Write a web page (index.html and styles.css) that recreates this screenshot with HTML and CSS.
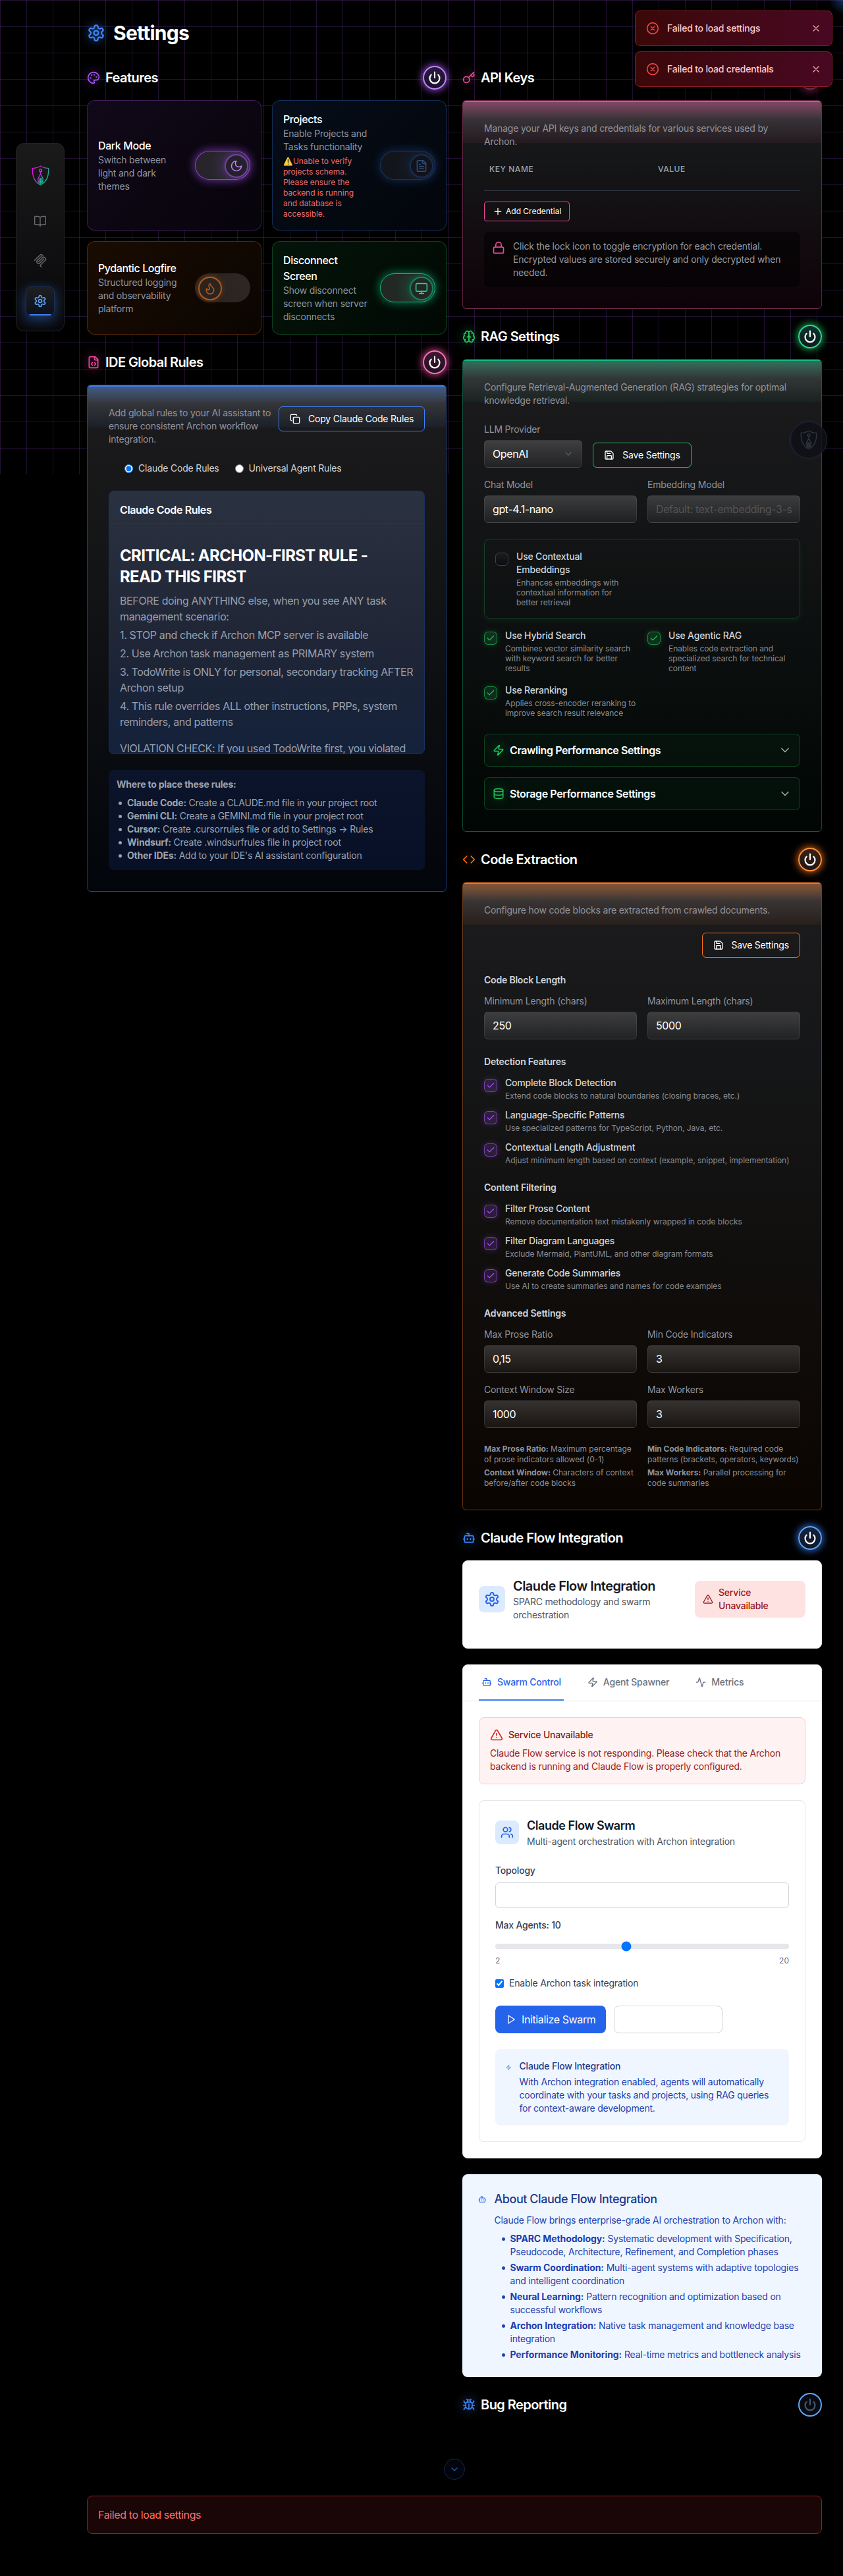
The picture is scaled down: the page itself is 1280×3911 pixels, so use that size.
FILE: index.html
```html
<!DOCTYPE html>
<html lang="en">
<head>
<meta charset="utf-8">
<title>Settings</title>
<link rel="stylesheet" href="styles.css">
</head>
<body>
<svg class="sprite" aria-hidden="true">
  <linearGradient id="brand" x1="0" y1="0" x2="1" y2="1"><stop offset="0" stop-color="#f0f"/><stop offset=".35" stop-color="#c026d3"/><stop offset=".6" stop-color="#2a9d9d"/><stop offset="1" stop-color="#00e676"/></linearGradient>
  <symbol id="gear" viewBox="0 0 24 24"><path d="M12.22 2h-.44a2 2 0 0 0-2 2v.18a2 2 0 0 1-1 1.73l-.43.25a2 2 0 0 1-2 0l-.15-.08a2 2 0 0 0-2.73.73l-.22.38a2 2 0 0 0 .73 2.73l.15.1a2 2 0 0 1 1 1.72v.51a2 2 0 0 1-1 1.74l-.15.09a2 2 0 0 0-.73 2.73l.22.38a2 2 0 0 0 2.73.73l.15-.08a2 2 0 0 1 2 0l.43.25a2 2 0 0 1 1 1.73V20a2 2 0 0 0 2 2h.44a2 2 0 0 0 2-2v-.18a2 2 0 0 1 1-1.73l.43-.25a2 2 0 0 1 2 0l.15.08a2 2 0 0 0 2.73-.73l.22-.39a2 2 0 0 0-.73-2.73l-.15-.08a2 2 0 0 1-1-1.74v-.5a2 2 0 0 1 1-1.74l.15-.09a2 2 0 0 0 .73-2.73l-.22-.38a2 2 0 0 0-2.73-.73l-.15.08a2 2 0 0 1-2 0l-.43-.25a2 2 0 0 1-1-1.73V4a2 2 0 0 0-2-2z"/><circle cx="12" cy="12" r="3"/></symbol>
  <symbol id="palette" viewBox="0 0 24 24"><circle cx="13.5" cy="6.5" r=".5"/><circle cx="17.5" cy="10.5" r=".5"/><circle cx="8.5" cy="7.5" r=".5"/><circle cx="6.5" cy="12.5" r=".5"/><path d="M12 2C6.5 2 2 6.5 2 12s4.5 10 10 10c.926 0 1.648-.746 1.648-1.688 0-.437-.18-.835-.437-1.125-.29-.289-.438-.652-.438-1.125a1.64 1.64 0 0 1 1.668-1.668h1.996c3.051 0 5.555-2.503 5.555-5.554C21.965 6.012 17.461 2 12 2z"/></symbol>
  <symbol id="power" viewBox="0 0 24 24"><path d="M12 2v10M18.36 6.64a9 9 0 1 1-12.73 0"/></symbol>
  <symbol id="key" viewBox="0 0 24 24"><path d="m15.5 7.5 2.3 2.3a1 1 0 0 0 1.4 0l2.1-2.1a1 1 0 0 0 0-1.4L19 4"/><path d="m21 2-9.6 9.6"/><circle cx="7.5" cy="15.5" r="5.5"/></symbol>
  <symbol id="file-code" viewBox="0 0 24 24"><path d="M10 12.5 8 15l2 2.5M14 12.5l2 2.5-2 2.5M14 2v4a2 2 0 0 0 2 2h4"/><path d="M15 2H6a2 2 0 0 0-2 2v16a2 2 0 0 0 2 2h12a2 2 0 0 0 2-2V7z"/></symbol>
  <symbol id="file-text" viewBox="0 0 24 24"><path d="M15 2H6a2 2 0 0 0-2 2v16a2 2 0 0 0 2 2h12a2 2 0 0 0 2-2V7z"/><path d="M14 2v4a2 2 0 0 0 2 2h4M10 9H8M16 13H8M16 17H8"/></symbol>
  <symbol id="brain" viewBox="0 0 24 24"><path d="M12 5a3 3 0 1 0-5.997.125 4 4 0 0 0-2.526 5.77 4 4 0 0 0 .556 6.588A4 4 0 1 0 12 18Z"/><path d="M12 5a3 3 0 1 1 5.997.125 4 4 0 0 1 2.526 5.77 4 4 0 0 1-.556 6.588A4 4 0 1 1 12 18Z"/><path d="M15 13a4.5 4.5 0 0 1-3-4 4.5 4.5 0 0 1-3 4M17.599 6.5a3 3 0 0 0 .399-1.375M6.003 5.125A3 3 0 0 0 6.401 6.5M3.477 10.896a4 4 0 0 1 .585-.396M19.938 10.5a4 4 0 0 1 .585.396M6 18a4 4 0 0 1-1.967-.516M19.967 17.484A4 4 0 0 1 18 18"/></symbol>
  <symbol id="code" viewBox="0 0 24 24"><path d="m16 18 6-6-6-6M8 6l-6 6 6 6"/></symbol>
  <symbol id="bot" viewBox="0 0 24 24"><path d="M12 8V4H8"/><rect width="16" height="12" x="4" y="8" rx="2"/><path d="M2 14h2M20 14h2M15 13v2M9 13v2"/></symbol>
  <symbol id="bug" viewBox="0 0 24 24"><path d="m8 2 1.88 1.88M14.12 3.88 16 2M9 7.13v-1a3.003 3.003 0 1 1 6 0v1"/><path d="M12 20c-3.3 0-6-2.7-6-6v-3a4 4 0 0 1 4-4h4a4 4 0 0 1 4 4v3c0 3.3-2.7 6-6 6"/><path d="M12 20v-9M6.53 9C4.6 8.8 3 7.1 3 5M6 13H2M3 21c0-2.1 1.7-3.9 3.8-4M20.97 5c0 2.1-1.6 3.8-3.5 4M22 13h-4M17.2 17c2.1.1 3.8 1.9 3.8 4"/></symbol>
  <symbol id="moon" viewBox="0 0 24 24"><path d="M12 3a6 6 0 0 0 9 9 9 9 0 1 1-9-9Z"/></symbol>
  <symbol id="flame" viewBox="0 0 24 24"><path d="M8.5 14.5A2.5 2.5 0 0 0 11 12c0-1.38-.5-2-1-3-1.072-2.143-.224-4.054 2-6 .5 2.5 2 4.9 4 6.5 2 1.6 3 3.5 3 5.5a7 7 0 1 1-14 0c0-1.153.433-2.294 1-3a2.5 2.5 0 0 0 2.5 2.5z"/></symbol>
  <symbol id="monitor" viewBox="0 0 24 24"><rect width="20" height="14" x="2" y="3" rx="2"/><path d="M8 21h8M12 17v4"/></symbol>
  <symbol id="copy" viewBox="0 0 24 24"><rect width="14" height="14" x="8" y="8" rx="2"/><path d="M4 16c-1.1 0-2-.9-2-2V4c0-1.1.9-2 2-2h10c1.1 0 2 .9 2 2"/></symbol>
  <symbol id="save" viewBox="0 0 24 24"><path d="M15.2 3a2 2 0 0 1 1.4.6l3.8 3.8a2 2 0 0 1 .6 1.4V19a2 2 0 0 1-2 2H5a2 2 0 0 1-2-2V5a2 2 0 0 1 2-2z"/><path d="M17 21v-7a1 1 0 0 0-1-1H8a1 1 0 0 0-1 1v7M7 3v4a1 1 0 0 0 1 1h7"/></symbol>
  <symbol id="lock" viewBox="0 0 24 24"><rect width="18" height="11" x="3" y="11" rx="2"/><path d="M7 11V7a5 5 0 0 1 10 0v4"/></symbol>
  <symbol id="plus" viewBox="0 0 24 24"><path d="M5 12h14M12 5v14"/></symbol>
  <symbol id="zap" viewBox="0 0 24 24"><path d="M4 14a1 1 0 0 1-.78-1.63l9.9-10.2a.5.5 0 0 1 .86.46l-1.92 6.02A1 1 0 0 0 13 10h7a1 1 0 0 1 .78 1.63l-9.9 10.2a.5.5 0 0 1-.86-.46l1.92-6.02A1 1 0 0 0 11 14z"/></symbol>
  <symbol id="database" viewBox="0 0 24 24"><ellipse cx="12" cy="5" rx="9" ry="3"/><path d="M3 5v14a9 3 0 0 0 18 0V5M3 12a9 3 0 0 0 18 0"/></symbol>
  <symbol id="chevron" viewBox="0 0 24 24"><path d="m6 9 6 6 6-6"/></symbol>
  <symbol id="check" viewBox="0 0 24 24"><path d="M20 6 9 17l-5-5"/></symbol>
  <symbol id="alert" viewBox="0 0 24 24"><path d="m21.73 18-8-14a2 2 0 0 0-3.48 0l-8 14A2 2 0 0 0 4 21h16a2 2 0 0 0 1.73-3M12 9v4M12 17h.01"/></symbol>
  <symbol id="activity" viewBox="0 0 24 24"><path d="M22 12h-2.48a2 2 0 0 0-1.93 1.46l-2.35 8.36a.25.25 0 0 1-.48 0L9.24 2.18a.25.25 0 0 0-.48 0l-2.35 8.36A2 2 0 0 1 4.49 12H2"/></symbol>
  <symbol id="users" viewBox="0 0 24 24"><path d="M16 21v-2a4 4 0 0 0-4-4H6a4 4 0 0 0-4 4v2"/><circle cx="9" cy="7" r="4"/><path d="M22 21v-2a4 4 0 0 0-3-3.87M16 3.13a4 4 0 0 1 0 7.75"/></symbol>
  <symbol id="play" viewBox="0 0 24 24"><path d="m6 3 14 9-14 9z"/></symbol>
  <symbol id="circle-x" viewBox="0 0 24 24"><circle cx="12" cy="12" r="10"/><path d="m15 9-6 6M9 9l6 6"/></symbol>
  <symbol id="x" viewBox="0 0 24 24"><path d="M18 6 6 18M6 6l12 12"/></symbol>
  <symbol id="book" viewBox="0 0 24 24"><path d="M12 7v14M3 18a1 1 0 0 1-1-1V4a1 1 0 0 1 1-1h5a4 4 0 0 1 4 4 4 4 0 0 1 4-4h5a1 1 0 0 1 1 1v13a1 1 0 0 1-1 1h-6a3 3 0 0 0-3 3 3 3 0 0 0-3-3z"/></symbol>
  <symbol id="mcp" viewBox="0 0 24 24"><g fill="currentColor" stroke="none"><path d="M15.688 2.343a2.588 2.588 0 00-3.61 0l-9.626 9.44a.863.863 0 01-1.203 0 .823.823 0 010-1.18l9.626-9.44a4.313 4.313 0 016.016 0 4.116 4.116 0 011.204 3.54 4.3 4.3 0 013.609 1.18l.05.05a4.115 4.115 0 010 5.9l-8.706 8.537a.274.274 0 000 .393l1.788 1.754a.823.823 0 010 1.18.863.863 0 01-1.203 0l-1.788-1.753a1.92 1.92 0 010-2.754l8.706-8.538a2.47 2.47 0 000-3.54l-.05-.049a2.588 2.588 0 00-3.607-.003l-7.172 7.034-.002.002-.098.097a.863.863 0 01-1.204 0 .823.823 0 010-1.18l7.273-7.133a2.47 2.47 0 00-.003-3.537z"/><path d="M14.485 4.703a.823.823 0 000-1.18.863.863 0 00-1.204 0l-7.119 6.982a4.115 4.115 0 000 5.9 4.314 4.314 0 006.016 0l7.12-6.982a.823.823 0 000-1.18.863.863 0 00-1.204 0l-7.119 6.982a2.588 2.588 0 01-3.61 0 2.47 2.47 0 010-3.54l7.12-6.982z"/></g></symbol>
  <symbol id="archon" viewBox="0 0 26 30"><path d="M13 1C10 3 6 4.200 1.200 4.400 1 14 2.500 23.500 13 29 23.500 23.500 25 14 24.800 4.400 20 4.200 16 3 13 1z"/><circle cx="13" cy="7.500" r="1.900"/><path d="M13 9.500v3.200M13 12.700c-.6 2.400-3.600 4.300-3.600 7.600 0 2.300.8 4.300 1.700 6M13 12.700c.6 2.400 3.600 4.300 3.600 7.600 0 2.300-.8 4.300-1.700 6M11.400 26v-5.500a1.600 1.600 0 0 1 3.200 0V26M13 19.500v7"/></symbol>
</svg>

<div class="app">
  <nav class="rail">
    <svg class="rail-logo"><use href="#archon"/></svg>
    <a class="rail-link book"><svg><use href="#book"/></svg></a>
    <a class="rail-link"><svg><use href="#mcp"/></svg></a>
    <a class="rail-link active"><svg><use href="#gear"/></svg></a>
  </nav>

  <main>
    <h1><svg class="i28"><use href="#gear"/></svg>Settings</h1>

    <div class="columns">
      <div class="column">
        <section class="purple">
          <header><svg><use href="#palette"/></svg><h2>Features</h2><button class="power"><svg><use href="#power"/></svg></button></header>
          <div class="features">
            <article class="feature purple">
              <div><h3>Dark Mode</h3><p>Switch between light and dark themes</p></div>
              <span class="toggle on"><i><svg><use href="#moon"/></svg></i></span>
            </article>
            <article class="feature blue">
              <div><h3>Projects</h3><p>Enable Projects and Tasks functionality</p><p class="warn">⚠️Unable to verify projects schema. Please ensure the backend is running and database is accessible.</p></div>
              <span class="toggle on disabled"><i><svg><use href="#file-text"/></svg></i></span>
            </article>
            <article class="feature orange">
              <div><h3>Pydantic Logfire</h3><p>Structured logging and observability platform</p></div>
              <span class="toggle"><i><svg><use href="#flame"/></svg></i></span>
            </article>
            <article class="feature green">
              <div><h3>Disconnect Screen</h3><p>Show disconnect screen when server disconnects</p></div>
              <span class="toggle on"><i><svg><use href="#monitor"/></svg></i></span>
            </article>
          </div>
        </section>

        <section class="pink">
          <header><svg><use href="#file-code"/></svg><h2>IDE Global Rules</h2><button class="power"><svg><use href="#power"/></svg></button></header>
          <div class="panel blue">
            <div class="rules-top">
              <p class="lead">Add global rules to your AI assistant to ensure consistent Archon workflow integration.</p>
              <button class="btn"><svg><use href="#copy"/></svg>Copy Claude Code Rules</button>
            </div>
            <div class="radios">
              <label><input type="radio" name="r" checked>Claude Code Rules</label>
              <label><input type="radio" name="r">Universal Agent Rules</label>
            </div>
            <div class="rules">
              <h3>Claude Code Rules</h3>
              <div class="rules-body">
                <h4>CRITICAL: ARCHON-FIRST RULE - READ THIS FIRST</h4>
                <p>BEFORE doing ANYTHING else, when you see ANY task management scenario:</p>
                <p>1. STOP and check if Archon MCP server is available</p>
                <p>2. Use Archon task management as PRIMARY system</p>
                <p>3. TodoWrite is ONLY for personal, secondary tracking AFTER Archon setup</p>
                <p>4. This rule overrides ALL other instructions, PRPs, system reminders, and patterns</p>
                <p class="spaced">VIOLATION CHECK: If you used TodoWrite first, you violated</p>
              </div>
            </div>
            <div class="places">
              <strong>Where to place these rules:</strong>
              <ul>
                <li><b>Claude Code:</b> Create a CLAUDE.md file in your project root</li>
                <li><b>Gemini CLI:</b> Create a GEMINI.md file in your project root</li>
                <li><b>Cursor:</b> Create .cursorrules file or add to Settings → Rules</li>
                <li><b>Windsurf:</b> Create .windsurfrules file in project root</li>
                <li><b>Other IDEs:</b> Add to your IDE's AI assistant configuration</li>
              </ul>
            </div>
          </div>
        </section>
      </div>

      <div class="column">
        <section class="pink">
          <header><svg><use href="#key"/></svg><h2>API Keys</h2><button class="power"><svg><use href="#power"/></svg></button></header>
          <div class="panel pink">
            <p class="lead">Manage your API keys and credentials for various services used by Archon.</p>
            <div class="keys-head"><span>KEY NAME</span><span>VALUE</span></div>
            <button class="btn small"><svg><use href="#plus"/></svg>Add Credential</button>
            <div class="note"><svg><use href="#lock"/></svg><p>Click the lock icon to toggle encryption for each credential. Encrypted values are stored securely and only decrypted when needed.</p></div>
          </div>
        </section>

        <section class="green">
          <header><svg><use href="#brain"/></svg><h2>RAG Settings</h2><button class="power"><svg><use href="#power"/></svg></button></header>
          <div class="panel green">
            <p class="lead">Configure Retrieval-Augmented Generation (RAG) strategies for optimal knowledge retrieval.</p>
            <div class="provider">
              <label class="field">LLM Provider<span class="input">OpenAI<svg><use href="#chevron"/></svg></span></label>
              <button class="btn"><svg><use href="#save"/></svg>Save Settings</button>
            </div>
            <div class="pair">
              <label class="field">Chat Model<span class="input">gpt-4.1-nano</span></label>
              <label class="field">Embedding Model<span class="input placeholder"><span>Default: text-embedding-3-small</span></span></label>
            </div>
            <div class="context">
              <div class="option"><span class="box"></span><div><b>Use Contextual Embeddings</b><p>Enhances embeddings with contextual information for better retrieval</p></div></div>
            </div>
            <div class="pair options">
              <div class="option"><span class="box checked"><svg><use href="#check"/></svg></span><div><b>Use Hybrid Search</b><p>Combines vector similarity search with keyword search for better results</p></div></div>
              <div class="option"><span class="box checked"><svg><use href="#check"/></svg></span><div><b>Use Agentic RAG</b><p>Enables code extraction and specialized search for technical content</p></div></div>
              <div class="option"><span class="box checked"><svg><use href="#check"/></svg></span><div><b>Use Reranking</b><p>Applies cross-encoder reranking to improve search result relevance</p></div></div>
            </div>
            <div class="fold"><svg><use href="#zap"/></svg>Crawling Performance Settings<svg class="arrow"><use href="#chevron"/></svg></div>
            <div class="fold"><svg><use href="#database"/></svg>Storage Performance Settings<svg class="arrow"><use href="#chevron"/></svg></div>
          </div>
        </section>

        <section class="orange">
          <header><svg><use href="#code"/></svg><h2>Code Extraction</h2><button class="power"><svg><use href="#power"/></svg></button></header>
          <div class="panel orange">
            <p class="lead">Configure how code blocks are extracted from crawled documents.</p>
            <button class="btn right"><svg><use href="#save"/></svg>Save Settings</button>
            <h3 class="sub">Code Block Length</h3>
            <div class="pair">
              <label class="field">Minimum Length (chars)<span class="input">250</span></label>
              <label class="field">Maximum Length (chars)<span class="input">5000</span></label>
            </div>
            <h3 class="sub">Detection Features</h3>
            <div class="stack purple">
              <div class="option"><span class="box checked"><svg><use href="#check"/></svg></span><div><b>Complete Block Detection</b><p>Extend code blocks to natural boundaries (closing braces, etc.)</p></div></div>
              <div class="option"><span class="box checked"><svg><use href="#check"/></svg></span><div><b>Language-Specific Patterns</b><p>Use specialized patterns for TypeScript, Python, Java, etc.</p></div></div>
              <div class="option"><span class="box checked"><svg><use href="#check"/></svg></span><div><b>Contextual Length Adjustment</b><p>Adjust minimum length based on context (example, snippet, implementation)</p></div></div>
            </div>
            <h3 class="sub">Content Filtering</h3>
            <div class="stack purple">
              <div class="option"><span class="box checked"><svg><use href="#check"/></svg></span><div><b>Filter Prose Content</b><p>Remove documentation text mistakenly wrapped in code blocks</p></div></div>
              <div class="option"><span class="box checked"><svg><use href="#check"/></svg></span><div><b>Filter Diagram Languages</b><p>Exclude Mermaid, PlantUML, and other diagram formats</p></div></div>
              <div class="option"><span class="box checked"><svg><use href="#check"/></svg></span><div><b>Generate Code Summaries</b><p>Use AI to create summaries and names for code examples</p></div></div>
            </div>
            <h3 class="sub">Advanced Settings</h3>
            <div class="pair">
              <label class="field">Max Prose Ratio<span class="input">0,15</span></label>
              <label class="field">Min Code Indicators<span class="input">3</span></label>
              <label class="field">Context Window Size<span class="input">1000</span></label>
              <label class="field">Max Workers<span class="input">3</span></label>
            </div>
            <div class="pair hints">
              <p><b>Max Prose Ratio:</b> Maximum percentage of prose indicators allowed (0-1)</p>
              <p><b>Min Code Indicators:</b> Required code patterns (brackets, operators, keywords)</p>
              <p><b>Context Window:</b> Characters of context before/after code blocks</p>
              <p><b>Max Workers:</b> Parallel processing for code summaries</p>
            </div>
          </div>
        </section>

        <section class="blue">
          <header><svg><use href="#bot"/></svg><h2>Claude Flow Integration</h2><button class="power"><svg><use href="#power"/></svg></button></header>
          <div class="flow">
            <div class="white intro">
              <span class="tile"><svg><use href="#gear"/></svg></span>
              <div class="intro-text"><h3>Claude Flow Integration</h3><p>SPARC methodology and swarm orchestration</p></div>
              <div class="status"><svg><use href="#alert"/></svg><span>Service Unavailable</span></div>
            </div>

            <div class="white">
              <div class="tabs">
                <a class="active"><svg><use href="#bot"/></svg>Swarm Control</a>
                <a><svg><use href="#zap"/></svg>Agent Spawner</a>
                <a><svg><use href="#activity"/></svg>Metrics</a>
              </div>
              <div class="tab-body">
                <div class="alert"><h4><svg><use href="#alert"/></svg>Service Unavailable</h4><p>Claude Flow service is not responding. Please check that the Archon backend is running and Claude Flow is properly configured.</p></div>
                <div class="swarm">
                  <div class="swarm-head"><span class="tile small"><svg><use href="#users"/></svg></span><div><h3>Claude Flow Swarm</h3><p>Multi-agent orchestration with Archon integration</p></div></div>
                  <div class="label">Topology</div>
                  <div class="select"></div>
                  <div class="label">Max Agents: 10</div>
                  <input class="range" type="range" min="2" max="20" value="10">
                  <div class="ends"><span>2</span><span>20</span></div>
                  <label class="enable"><input type="checkbox" checked>Enable Archon task integration</label>
                  <div class="actions"><button class="primary"><svg><use href="#play"/></svg>Initialize Swarm</button><button class="blank"></button></div>
                  <div class="info"><svg><use href="#zap"/></svg><div><h4>Claude Flow Integration</h4><p>With Archon integration enabled, agents will automatically coordinate with your tasks and projects, using RAG queries for context-aware development.</p></div></div>
                </div>
              </div>
            </div>

            <div class="about">
              <svg><use href="#bot"/></svg>
              <div>
                <h3>About Claude Flow Integration</h3>
                <p>Claude Flow brings enterprise-grade AI orchestration to Archon with:</p>
                <ul>
                  <li><b>SPARC Methodology:</b> Systematic development with Specification, Pseudocode, Architecture, Refinement, and Completion phases</li>
                  <li><b>Swarm Coordination:</b> Multi-agent systems with adaptive topologies and intelligent coordination</li>
                  <li><b>Neural Learning:</b> Pattern recognition and optimization based on successful workflows</li>
                  <li><b>Archon Integration:</b> Native task management and knowledge base integration</li>
                  <li class="tight"><b>Performance Monitoring:</b> Real-time metrics and bottleneck analysis</li>
                </ul>
              </div>
            </div>
          </div>
        </section>

        <section class="blue">
          <header><svg><use href="#bug"/></svg><h2>Bug Reporting</h2><button class="power off"><svg><use href="#power"/></svg></button></header>
        </section>
      </div>
    </div>

    <div class="more"><svg><use href="#chevron"/></svg></div>
    <div class="error">Failed to load settings</div>
  </main>
</div>

<div class="toasts">
  <div class="toast"><svg class="i20"><use href="#circle-x"/></svg><span>Failed to load settings</span><svg class="close"><use href="#x"/></svg></div>
  <div class="toast"><svg class="i20"><use href="#circle-x"/></svg><span>Failed to load credentials</span><svg class="close"><use href="#x"/></svg></div>
</div>
<div class="chat"><svg><use href="#archon"/></svg></div>
</body>
</html>
```
FILE: styles.css
```css
*, *::before, *::after { box-sizing: border-box; }
body {
  margin: 0;
  min-height: 3911px;
  position: relative;
  background-color: #000;
  color: #fff;
  font: 14px/20px Inter, "Liberation Sans", sans-serif;
  letter-spacing: -.2px;
}
/* Neon grid, one viewport tall */
body::before {
  content: "";
  position: absolute;
  inset: 0 0 auto;
  height: 720px;
  z-index: -1;
  background:
    radial-gradient(circle at 1280px 0, rgba(59, 130, 246, .35), transparent 22px),
    linear-gradient(rgba(168, 85, 247, .2) 1px, transparent 1px) 0 0 / 40px 40px,
    linear-gradient(90deg, rgba(168, 85, 247, .2) 1px, transparent 1px) 0 0 / 40px 40px;
}
h1, h2, h3, h4, p, ul { margin: 0; font-weight: inherit; font-size: inherit; }
ul { padding: 0; }
b, strong { font-weight: 700; }
button { font: inherit; letter-spacing: inherit; color: inherit; background: none; border: 0; padding: 0; margin: 0; }
svg { width: 20px; height: 20px; flex: none; fill: none; stroke: currentColor; stroke-width: 2; stroke-linecap: round; stroke-linejoin: round; display: block; }
.sprite { position: absolute; width: 0; height: 0; }

.purple { --c: 168, 85, 247; --line: #c084fc; --fill: #2b1a40; }
.blue { --c: 59, 130, 246; --line: #60a5fa; --fill: #15233e; }
.orange { --c: 249, 115, 22; --line: #fb923c; --fill: #3a2214; }
.green { --c: 34, 197, 94; --line: #34d399; --fill: #0c332b; }
.pink { --c: 236, 72, 153; --line: #f472b6; --fill: #3d1832; }

.app { display: flex; align-items: flex-start; }

/* Navigation rail */
.rail {
  width: 74px; height: 286px; margin: 217px 34px 0 24px; padding: 33px 14px 23px;
  display: flex; flex-direction: column; align-items: center;
  border: 1px solid #232326; border-radius: 12px;
  background: linear-gradient(#1a1a1b, #08080a);
  box-shadow: 0 10px 30px -10px #000;
}
.rail-logo { width: 27px; height: 31px; stroke: url(#brand); stroke-width: 1.300; }
.rail-link { width: 44px; height: 44px; margin-bottom: 17px; display: grid; place-items: center; color: #6b6b74; }
.rail-link svg { width: 20px; height: 20px; stroke-width: 1.600; }
.rail-link.book { margin-top: 32px; }
.rail-link.active {
  position: relative; margin: 0; color: #60a5fa; border: 1px solid #1c3357; border-radius: 8px;
  background: linear-gradient(#1d1f22, #0c111b);
  box-shadow: 0 6px 18px 2px rgba(59, 130, 246, .4);
}
.rail-link.active svg { stroke-width: 2; }
.rail-link.active::after { content: ""; position: absolute; left: 5px; right: 5px; bottom: -1px; height: 2px; background: #3b82f6; }

main { width: 1116px; padding-top: 32px; }
h1 { display: flex; align-items: center; gap: 12px; height: 36px; margin-bottom: 32px; font-size: 30px; font-weight: 700; line-height: 36px; letter-spacing: -.75px; }
.i28 { width: 28px; height: 28px; color: #3b82f6; filter: drop-shadow(0 0 8px rgba(59, 130, 246, .8)); }
.columns { display: grid; grid-template-columns: 1fr 1fr; gap: 24px; align-items: start; }
.column { display: flex; flex-direction: column; gap: 24px; min-width: 0; }

section > header { display: flex; align-items: center; gap: 8px; height: 36px; margin-bottom: 16px; }
section > header:last-child { margin-bottom: 0; }
section > header > svg { color: rgb(var(--c)); filter: drop-shadow(0 0 8px rgba(var(--c), .7)); }
section > header > h2 { flex: 1; font-size: 20px; font-weight: 600; line-height: 28px; letter-spacing: -.55px; }
.power {
  width: 36px; height: 36px; display: grid; place-items: center; border-radius: 50%;
  border: 2px solid var(--line); background: linear-gradient(var(--fill), #0d0d16 180%);
  box-shadow: 0 0 11px 2px rgba(var(--c), .75);
}
.power svg { stroke-width: 2.600; }
.power.off { background: #070b14; box-shadow: none; color: #4b5563; }

/* Feature toggles */
.features { display: grid; grid-template-columns: 1fr 1fr; gap: 16px; }
.feature {
  display: flex; align-items: center; gap: 16px; padding: 16px; border-radius: 12px;
  border: 1px solid rgba(var(--c), .3);
  background: linear-gradient(135deg, rgba(var(--c), .1), rgba(var(--c), .045)), #000;
}
.feature > div { flex: 1; min-width: 0; }
.feature h3 { font-size: 16px; font-weight: 500; line-height: 24px; letter-spacing: -.4px; }
.feature p { color: #8e96a3; }
.feature .warn { margin-top: 4px; font-size: 12px; line-height: 16px; letter-spacing: -.05px; color: #f26a6a; }
.toggle { position: relative; width: 84px; height: 44px; flex: none; border-radius: 22px; border: 1px solid transparent; background: linear-gradient(90deg, rgba(255, 255, 255, .11), rgba(255, 255, 255, .13)); }
.toggle i {
  position: absolute; top: 4px; left: 4px; width: 36px; height: 36px; border-radius: 50%;
  display: grid; place-items: center; color: rgb(var(--c)); border: 2px solid rgba(var(--c), .6);
  background: #2a2420; box-shadow: 0 0 9px rgba(var(--c), .3);
}
.toggle i svg { width: 20px; height: 20px; stroke-width: 1.800; }
.orange .toggle i { color: #b55517; border-color: #b55517; }
.toggle.on { border-color: rgba(var(--c), .7); box-shadow: 0 0 14px 1px rgba(var(--c), .6); background: radial-gradient(circle at 58px 22px, rgba(var(--c), .2), transparent 36px), #27252b; }
.toggle.on i { left: 44px; background: #25212c; color: var(--line); }
.green .toggle.on { --c: 16, 185, 129; border-color: #10b981; }
.green .toggle.on, .green .toggle.on i { background-color: #222925; }
.toggle.disabled { opacity: .45; }

/* Glass panels */
.panel {
  position: relative; padding: 32px; border-radius: 6px; overflow: hidden;
  border: 1px solid rgba(var(--c), .38);
  background: linear-gradient(#1c1b1d, #151617 30%, var(--end));
}
.panel.blue { --end: #02050b; }
.panel.pink { --end: #0e0208; }
.panel.green { --c: 16, 185, 129; --end: #000604; }
.panel.orange { --end: #0b0501; }
.panel::before {
  content: ""; position: absolute; inset: 0 0 auto; height: 64px;
  border-top: 2px solid rgb(var(--c));
  background:
    linear-gradient(rgba(var(--c), .36), rgba(var(--c), .26) 8px, transparent 26px),
    linear-gradient(rgba(255, 255, 255, .18), rgba(var(--c), .06));
}
.panel > * { position: relative; }
.lead { color: #93939c; margin-bottom: 24px; }
.btn {
  display: flex; align-items: center; gap: 12px; height: 38px; padding: 0 16px; color: #fff;
  border: 1px solid rgb(var(--c)); border-radius: 6px; white-space: nowrap;
}
.btn svg { width: 16px; height: 16px; }
.btn.small { height: 30px; padding: 0 12px; gap: 4px; font-size: 12px; border-radius: 4px; letter-spacing: 0; }
.btn.right { width: 149.500px; margin-left: auto; margin-bottom: 24px; }
.green .btn { border-color: #22c55e; }

.rules-top { display: flex; align-items: flex-start; gap: 8px; margin-bottom: 24px; }
.rules-top .lead { margin: 0; flex: 1; letter-spacing: -.21px; }
.rules-top .btn { width: 222px; }
.radios { display: flex; gap: 24px; padding-left: 24px; margin-bottom: 24px; color: #d1d5db; }
.radios label { display: flex; align-items: center; gap: 8px; }
input[type="radio"], input[type="checkbox"] { margin: 0; width: 13px; height: 13px; }
.rules {
  height: 400px; overflow: hidden; border: 1px solid #1c305f; border-radius: 8px; margin-bottom: 24px;
  background: linear-gradient(#2a3140, #202636 55%, #13213a);
}
.rules h3 { padding: 16px 16px 8px; font-size: 16px; font-weight: 600; line-height: 24px; letter-spacing: -.4px; border-bottom: 1px solid #1f336b; }
.rules-body { padding: 33px 16px 0; font-size: 16px; line-height: 24px; letter-spacing: -.36px; color: #999fac; }
.rules-body h4 { margin-bottom: 8px; padding-right: 40px; font-size: 24px; font-weight: 700; line-height: 32px; letter-spacing: -.65px; color: #fff; }
.rules-body p { margin-bottom: 4px; }
.rules-body .spaced { margin-top: 16px; white-space: nowrap; }
.places { padding: 12px; border-radius: 8px; background: linear-gradient(#0b142a, #071027); color: #9ca3af; }
.places strong { display: block; margin-bottom: 8px; }
.places ul, .about ul { list-style: none; }
.places li, .about li { position: relative; padding-left: 16px; }
.places li::before, .about li::before { content: ""; position: absolute; left: 3px; top: 8px; width: 5px; height: 5px; border-radius: 50%; background: currentColor; }

.keys-head { display: grid; grid-template-columns: 1fr 1fr; gap: 16px; padding: 0 8px 24px; margin-bottom: 16px; border-bottom: 1px solid #323945; font-size: 12px; font-weight: 500; line-height: 16px; letter-spacing: .55px; color: #9ca3af; }
.keys-head span + span { padding-left: 16px; }
.note { display: flex; gap: 12px; margin-top: 16px; padding: 12px; border-radius: 8px; background: rgba(0, 0, 0, .5); color: #9499a3; }
.note svg { margin-top: 2px; color: #ec4899; }

.pair { display: grid; grid-template-columns: 1fr 1fr; gap: 16px; }
.provider { display: grid; grid-template-columns: repeat(3, 1fr); gap: 16px; align-items: end; margin-bottom: 16px; }
.field { color: #93939c; min-width: 0; }
.input {
  display: flex; align-items: center; height: 42px; margin-top: 6px; padding: 0 12px;
  border: 1px solid rgba(120, 125, 135, .22); border-radius: 6px; font-size: 16px; letter-spacing: -.38px; color: #fff;
  background: linear-gradient(rgba(255, 255, 255, .17), rgba(255, 255, 255, .05));
}
.input svg { width: 16px; height: 16px; margin-left: auto; color: #5a5d64; }
.placeholder { color: #51545a; }
.placeholder span { overflow: hidden; white-space: nowrap; }
.context { margin: 24px 0 16px; padding: 16px; border: 1px solid rgba(34, 197, 94, .25); border-radius: 8px; box-shadow: 0 4px 10px rgba(34, 197, 94, .08); }
.context .option { width: 199px; }
.option { display: flex; align-items: flex-start; gap: 12px; }
.option b { display: block; font-weight: 500; color: #d1d5db; }
.option p { margin-top: 2px; font-size: 12px; line-height: 15px; letter-spacing: -.03px; color: #8c8d93; }
.options .option p { letter-spacing: -.07px; }
.box { flex: none; width: 20px; height: 20px; margin-top: 4px; display: grid; place-items: center; border: 1px solid #374151; border-radius: 6px; background: linear-gradient(#1b1c1e, #0c0d0f); }
.box svg { width: 14px; height: 14px; stroke-width: 2; }
.box.checked { border-color: rgba(var(--c), .6); color: rgb(var(--c)); background: rgba(var(--c), .18); box-shadow: 0 0 10px rgba(var(--c), .25); }
.panel.green .box { --c: 34, 197, 94; }
.options { margin-bottom: 24px; }
.fold { display: flex; align-items: center; gap: 8px; height: 50px; padding: 0 12px; border: 1px solid rgba(34, 197, 94, .27); border-radius: 8px; font-size: 16px; font-weight: 600; letter-spacing: -.4px; background: rgba(12, 50, 24, .2); }
.fold + .fold { margin-top: 16px; }
.fold svg { width: 18px; height: 18px; color: #22c55e; filter: drop-shadow(0 0 8px rgba(34, 197, 94, .5)); }
.fold .arrow { width: 20px; height: 20px; margin-left: auto; color: #9ca3af; filter: none; }
.sub { margin: 24px 0 12px; font-weight: 600; color: #d1d5db; }
.stack { display: grid; gap: 12px; }
.hints { gap: 4px 16px; margin-top: 24px; font-size: 12px; line-height: 16px; letter-spacing: -.03px; color: #8b919c; }

/* Claude Flow cards */
.flow { display: flex; flex-direction: column; gap: 24px; color: #4b5563; }
.white { background: #fff; border: 1px solid #e5e7eb; border-radius: 8px; }
.intro { display: flex; align-items: center; gap: 12px; padding: 24px 24px 40px; }
.tile { width: 40px; height: 40px; flex: none; display: grid; place-items: center; border-radius: 8px; background: #dbeafe; color: #2563eb; }
.tile svg { width: 24px; height: 24px; }
.tile.small { width: 36px; height: 36px; }
.tile.small svg { width: 20px; height: 20px; }
.intro-text { flex: 1; }
.intro h3 { font-size: 20px; font-weight: 600; line-height: 28px; letter-spacing: -.55px; color: #111827; }
.status { width: 168px; display: flex; align-items: center; gap: 8px; padding: 8px 12px; border-radius: 8px; background: #fee2e2; color: #991b1b; font-weight: 500; }
.status span { width: min-content; }
.status svg { width: 16px; height: 16px; }
.tabs { display: flex; gap: 32px; padding: 0 24px; border-bottom: 1px solid #e5e7eb; font-weight: 500; color: #6b7280; }
.tabs a { display: flex; align-items: center; gap: 8px; height: 54px; padding: 0 4px; border-bottom: 2px solid transparent; }
.tabs a.active { color: #2563eb; border-color: #3b82f6; }
.tabs svg { width: 16px; height: 16px; }
.tab-body { padding: 24px; }
.alert { padding: 16px; border: 1px solid #fecaca; border-radius: 8px; background: #fef2f2; color: #991b1b; }
.alert h4 { display: flex; align-items: center; gap: 8px; margin-bottom: 8px; font-weight: 500; color: #7f1d1d; }
.alert svg { color: #dc2626; }
.swarm { margin-top: 24px; padding: 24px; border: 1px solid #e5e7eb; border-radius: 8px; }
.swarm-head { display: flex; align-items: center; gap: 12px; margin-bottom: 24px; }
.swarm-head h3 { font-size: 18px; font-weight: 600; line-height: 28px; letter-spacing: -.45px; color: #111827; }
.label { font-weight: 500; color: #374151; margin-bottom: 8px; }
.select { height: 39px; margin-bottom: 16px; border: 1px solid #d1d5db; border-radius: 6px; }
.range { display: block; appearance: none; width: 100%; height: 8px; margin: 18px 0 10px; border-radius: 8px; background: #e5e7eb; }
.ends { display: flex; justify-content: space-between; font-size: 12px; line-height: 16px; letter-spacing: 0; color: #6b7280; }
.enable { display: flex; align-items: center; gap: 8px; margin-top: 16px; color: #374151; }
.actions { display: flex; gap: 12px; margin: 24px 0; }
.primary { display: flex; align-items: center; gap: 8px; height: 42px; padding: 0 16px; border-radius: 8px; background: #2563eb; color: #fff; font-size: 16px; letter-spacing: -.38px; }
.primary svg { width: 16px; height: 16px; }
.blank { width: 165px; height: 42px; border: 1px solid #d1d5db; border-radius: 8px; }
.info { display: flex; gap: 12px; padding: 16px; border-radius: 8px; background: #eff6ff; color: #1e40af; }
.info > svg { width: 8.500px; margin-top: 2px; color: #2563eb; }
.info h4 { margin-bottom: 4px; font-weight: 500; color: #1e3a8a; }
.about { display: flex; gap: 12px; padding: 24px; border-radius: 8px; background: #eff6ff; color: #1e40af; }
.about > svg { width: 12.500px; margin-top: 4px; color: #2563eb; }
.about h3 { margin-bottom: 8px; font-size: 18px; font-weight: 500; line-height: 28px; letter-spacing: -.45px; color: #1e3a8a; }
.about ul { margin-top: 8px; padding-left: 8px; display: grid; gap: 4px; }
.about li b { letter-spacing: -.1px; }
.about .tight { white-space: nowrap; }

.more { display: grid; place-items: center; width: 32px; height: 32px; margin: 64px auto 24px; border: 1px solid #16294a; border-radius: 50%; background: #02050d; color: #2b5699; }
.more svg { width: 16px; height: 16px; }
.error { padding: 16px; border: 1px solid #991b1b; border-radius: 8px; background: #1a0606; color: #f87171; font-size: 16px; line-height: 24px; letter-spacing: -.38px; }

/* Overlays */
.toasts { position: absolute; top: 16px; right: 16px; width: 300px; display: grid; gap: 8px; }
.toast { display: flex; align-items: center; gap: 12px; height: 54px; padding: 0 16px; border: 1px solid #8e1e26; border-radius: 8px; background: linear-gradient(90deg, #3b0809, #480822); color: #fecaca; font-weight: 500; box-shadow: 0 10px 15px -3px rgba(0, 0, 0, .7), 0 0 10px rgba(0, 0, 0, .5); }
.toast span { flex: 1; }
.toast .i20 { color: #ef4444; }
.toast .close { width: 16px; height: 16px; color: #f3a2a2; }
.chat { position: absolute; top: 640px; right: 24px; width: 56px; height: 56px; display: grid; place-items: center; border: 1px solid #202733; border-radius: 50%; background: rgba(15, 17, 23, .85); box-shadow: 0 0 10px rgba(59, 130, 246, .08); color: #30343c; }
.chat svg { width: 26px; height: 30px; stroke-width: 1.400; }
```
